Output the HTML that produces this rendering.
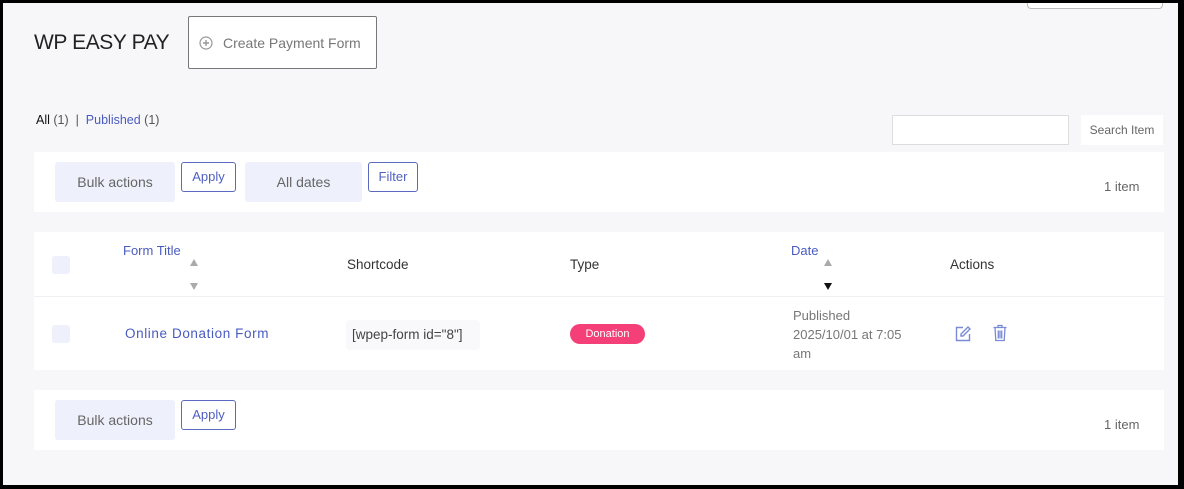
<!DOCTYPE html>
<html><head><meta charset="utf-8"><style>
*{box-sizing:border-box;margin:0;padding:0}
body{width:1184px;height:489px;background:#000;font-family:"Liberation Sans",sans-serif;position:relative;overflow:hidden}
#pg{position:absolute;left:3px;top:3px;width:1175px;height:482px;background:#f7f7fa;overflow:hidden}
.a{position:absolute}
.panel{position:absolute;left:31px;width:1130px;background:#fff}
.gbtn{position:absolute;background:#eef0fb;border-radius:3px;color:#666;font-size:14px;text-align:center}
.obtn{position:absolute;border:1px solid #5a6ac0;border-radius:3px;color:#5060c0;font-size:13px;text-align:center;background:#fff}
.cb{position:absolute;width:18px;height:18px;background:#eef0fb;border-radius:3px}
.blue{color:#4a5bbf}
.tri{position:absolute;width:0;height:0;border-left:4.5px solid transparent;border-right:4.5px solid transparent}
</style></head><body><div id="pg">
<div class="a" style="left:1024px;top:-6px;width:136px;height:12px;border:1px solid #bbb;border-radius:4px;background:#fff"></div>
<div class="a" style="left:31px;top:28px;font-size:21px;color:#222;letter-spacing:-0.4px">WP EASY PAY</div>
<div class="a" style="left:185px;top:13px;width:189px;height:53px;border:1px solid #777;border-radius:2px;background:#fff"></div>
<svg class="a" style="left:196px;top:33px" width="14" height="14" viewBox="0 0 14 14"><circle cx="7" cy="7" r="6" fill="none" stroke="#999" stroke-width="1.2"/><path d="M7 4v6M4 7h6" stroke="#999" stroke-width="1.4"/></svg>
<div class="a" style="left:220px;top:32px;font-size:14px;color:#777">Create Payment Form</div>
<div class="a" style="left:33px;top:110px;font-size:12.5px;color:#555"><span style="color:#111">All</span> (1) &nbsp;|&nbsp; <span class="blue">Published</span> (1)</div>
<div class="a" style="left:889px;top:112px;width:177px;height:30px;background:#fff;border:1px solid #ddd"></div>
<div class="a" style="left:1078px;top:112px;width:82px;height:30px;background:#fff;font-size:12px;color:#666;line-height:30px;text-align:center">Search Item</div>

<div class="panel" style="top:149px;height:60px"></div>
<div class="gbtn" style="left:52px;top:159px;width:120px;height:40px;line-height:40px">Bulk actions</div>
<div class="obtn" style="left:178px;top:159px;width:55px;height:30px;line-height:27px">Apply</div>
<div class="gbtn" style="left:242px;top:159px;width:117px;height:40px;line-height:40px">All dates</div>
<div class="obtn" style="left:365px;top:159px;width:50px;height:30px;line-height:27px">Filter</div>
<div class="a" style="left:1101px;top:176px;font-size:13px;color:#666">1 item</div>

<div class="panel" style="top:229px;height:138px"></div>
<div class="a" style="left:31px;top:293px;width:1130px;height:1px;background:#eef0f4"></div>
<div class="cb" style="left:49px;top:253px"></div>
<div class="a blue" style="left:120px;top:240px;font-size:13px">Form Title</div>
<div class="tri" style="left:187px;top:256px;border-bottom:7px solid #aaa"></div>
<div class="tri" style="left:187px;top:280px;border-top:7px solid #aaa"></div>
<div class="a" style="left:344px;top:254px;font-size:13.5px;color:#333">Shortcode</div>
<div class="a" style="left:567px;top:254px;font-size:13.5px;color:#333">Type</div>
<div class="a blue" style="left:788px;top:240px;font-size:13px">Date</div>
<div class="tri" style="left:821px;top:256px;border-bottom:7px solid #aaa"></div>
<div class="tri" style="left:821px;top:280px;border-top:7px solid #111"></div>
<div class="a" style="left:947px;top:254px;font-size:13.5px;color:#333">Actions</div>

<div class="cb" style="left:49px;top:322px"></div>
<div class="a blue" style="left:122px;top:323px;font-size:13.5px;letter-spacing:0.6px">Online Donation Form</div>
<div class="a" style="left:343px;top:317px;width:134px;height:30px;background:#f9f9fb;border-radius:4px;font-size:13.5px;color:#444;line-height:30px;padding-left:6px">[wpep-form id="8"]</div>
<div class="a" style="left:567px;top:321px;width:75px;height:20px;background:#f43f79;border-radius:10px;color:#fff;font-size:11px;text-align:center;line-height:20px">Donation</div>
<div class="a" style="left:790px;top:303px;font-size:13px;color:#777;line-height:19px">Published<br>2025/10/01 at 7:05<br>am</div>
<svg class="a" style="left:951px;top:322px" width="18" height="18" viewBox="0 0 18 18" fill="none" stroke="#7a8ad6" stroke-width="1.4"><path d="M9 2.5H2.5v13h13V9"/><path d="M14 2l2 2-7 7H7V9z"/></svg>
<svg class="a" style="left:989px;top:321px" width="16" height="18" viewBox="0 0 16 18" fill="none" stroke="#7a8ad6" stroke-width="1.3"><path d="M1.5 3.5h13M6 3.5V1.5h4v2M3 3.5l.8 13h8.4l.8-13M6.3 6.5v8M8 6.5v8M9.7 6.5v8"/></svg>

<div class="panel" style="top:387px;height:60px"></div>
<div class="gbtn" style="left:52px;top:397px;width:120px;height:40px;line-height:40px">Bulk actions</div>
<div class="obtn" style="left:178px;top:397px;width:55px;height:30px;line-height:27px">Apply</div>
<div class="a" style="left:1101px;top:414px;font-size:13px;color:#666">1 item</div>
</div></body></html>
